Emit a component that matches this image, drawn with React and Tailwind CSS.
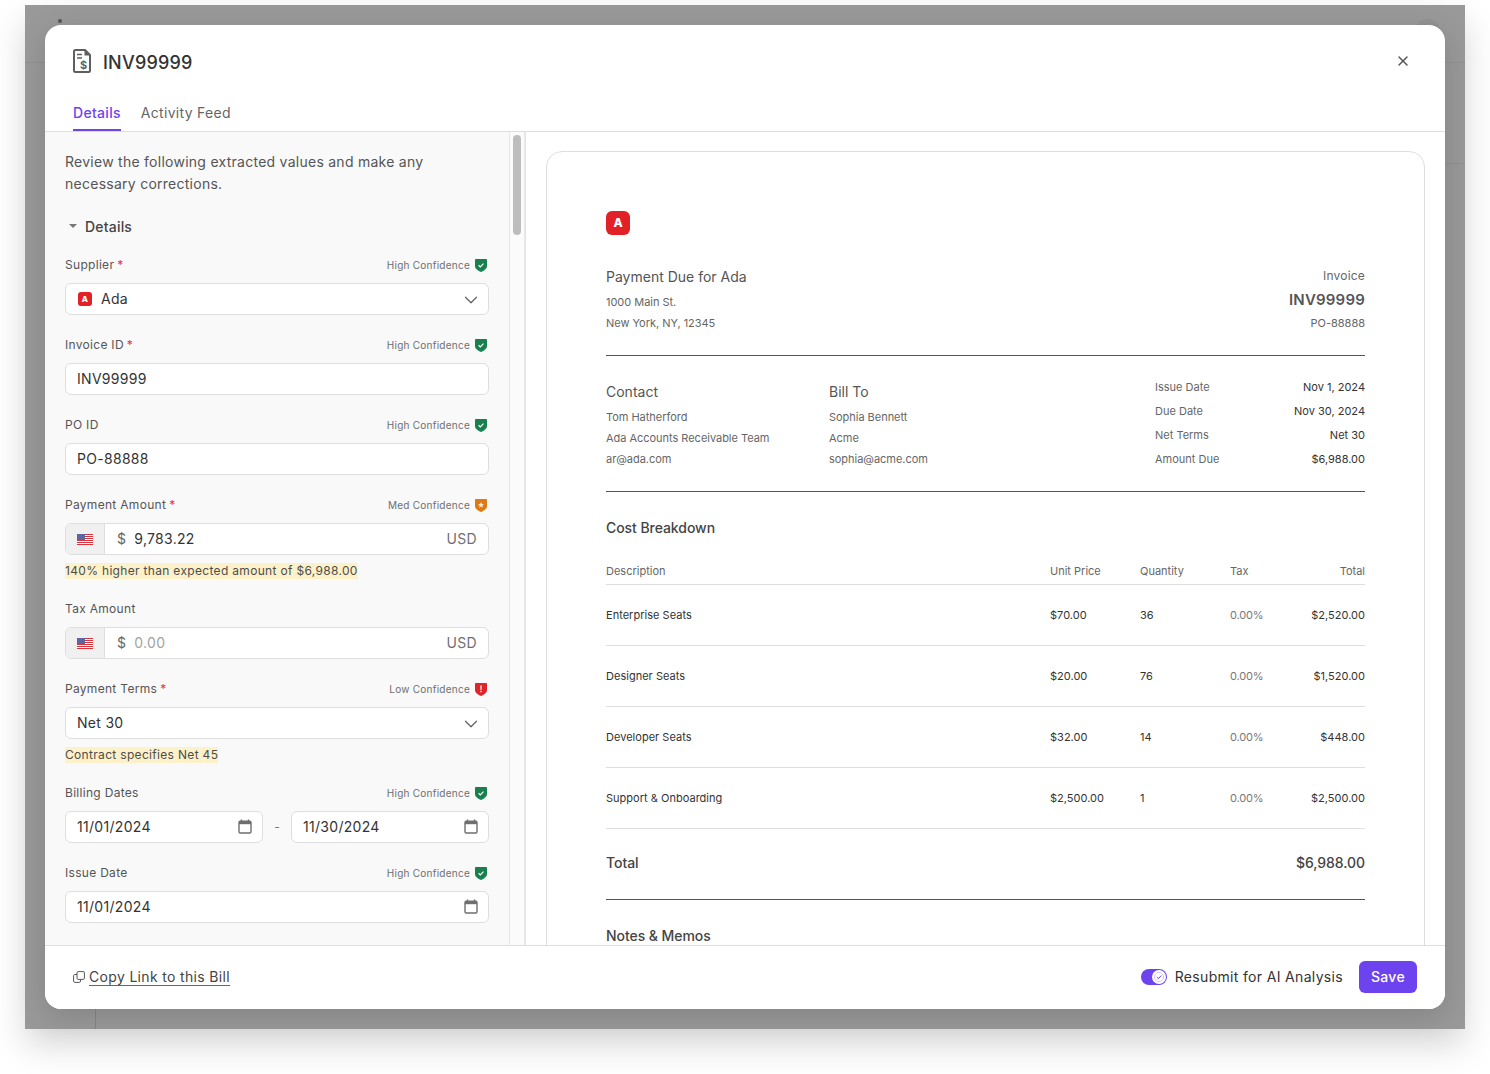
import React from 'react';
import { ChevronDown, X } from 'lucide-react';

const FONT = { fontFamily: 'Inter, "Noto Sans", sans-serif' };

const SHIELDS = {
  high: { label: 'High Confidence', color: '#1a7f4f' },
  med: { label: 'Med Confidence', color: '#dd7a12' },
  low: { label: 'Low Confidence', color: '#e0242c' },
};

const Shield = ({ level }) => {
  const { color } = SHIELDS[level];
  return (
    <svg width="12" height="13" viewBox="0 0 12 13" className="shrink-0">
      <path d="M0 0.8C0 0.4 0.4 0 0.8 0H11.2C11.6 0 12 0.4 12 0.8V7C12 9.8 9 11.8 6 13C3 11.8 0 9.8 0 7V0.8Z" fill={color} />
      {level === 'high' && <path d="M3.6 6.3L5.3 7.9L8.5 4.6" fill="none" stroke="#fff" strokeWidth="1.2" />}
      {level === 'med' && <path d="M6 2.9L6.9 4.9L9 5.1L7.4 6.5L7.9 8.6L6 7.5L4.1 8.6L4.6 6.5L3 5.1L5.1 4.9Z" fill="#fde7c8" />}
      {level === 'low' && <path d="M5.3 2.6H6.7L6.5 6.9H5.5ZM5.3 7.8H6.7V9.2H5.3Z" fill="#fff" />}
    </svg>
  );
};

const AdaLogo = ({ big }) => (
  <span
    className={
      big
        ? 'flex h-6 w-6 items-center justify-center rounded-md bg-[#e22127] text-[12px] font-extrabold text-white'
        : 'mt-[2px] ml-px flex h-[14px] w-[14px] items-center justify-center rounded-[3px] bg-[#e22127] text-[8px] font-extrabold text-white'
    }
  >
    A
  </span>
);

const Flag = () => (
  <svg width="16" height="11" viewBox="0 0 16 11" className="shrink-0">
    <rect width="16" height="11" fill="#fff" />
    {[0, 2, 4, 6, 8, 10].map((y) => (
      <rect key={y} y={y} width="16" height="1" fill="#d8343c" />
    ))}
    <rect width="8" height="6" fill="#3d4289" />
    {[1, 3, 5, 7].map((x) => [1, 3, 5].map((y) => <rect key={`${x}-${y}`} x={x - 0.5} y={y - 0.5} width="1" height="1" fill="#c9cbe4" />))}
  </svg>
);

const Calendar = () => (
  <svg width="14" height="15" viewBox="0 0 14 15" fill="none" className="shrink-0">
    <path d="M3.5 0.5V3M10.5 0.5V3" stroke="#6f6f6f" strokeWidth="1.4" />
    <rect x="1" y="2.2" width="12" height="11.8" rx="1.2" stroke="#6f6f6f" strokeWidth="1.4" />
    <rect x="1" y="2.2" width="12" height="3" fill="#6f6f6f" />
  </svg>
);

const DocIcon = () => (
  <svg width="18" height="24" viewBox="0 0 18 24" fill="none" className="shrink-0">
    <path d="M2.5 1H12L17 6V21.5C17 22.3 16.3 23 15.5 23H2.5C1.7 23 1 22.3 1 21.5V2.5C1 1.7 1.7 1 2.5 1Z" stroke="#5f5f5f" strokeWidth="2" strokeLinejoin="round" />
    <path d="M11.5 1V6.5H17L11.5 1Z" fill="#5f5f5f" />
    <path d="M4 5.5H9M4 9H9" stroke="#5f5f5f" strokeWidth="1.4" />
    <text x="10.5" y="20" textAnchor="middle" fontSize="11" fontWeight="700" fill="#5f5f5f" style={FONT}>$</text>
  </svg>
);

const CopyIcon = () => (
  <svg width="12" height="12" viewBox="0 0 12 12" fill="none" className="shrink-0">
    <rect x="4" y="0.6" width="7.4" height="7.8" rx="1.2" stroke="#555" strokeWidth="1" />
    <path d="M4 3.5H1.8C1.1 3.5 0.6 4 0.6 4.7V10.2C0.6 10.9 1.1 11.4 1.8 11.4H6.3C7 11.4 7.5 10.9 7.5 10.2V8.4" stroke="#555" strokeWidth="1" />
  </svg>
);

const FieldLabel = ({ label, required, level }) => (
  <div className="mb-[8px] flex h-[20px] items-center justify-between">
    <span className="text-[12px] tracking-[0.3px] text-[#555]">
      {label}
      {required && <span className="ml-[3px] text-[#e0343c]">*</span>}
    </span>
    {level && (
      <span className="flex items-center gap-[5px] pr-[2px] text-[10px] tracking-[0.25px] text-[#6f6f6f]">
        {SHIELDS[level].label}
        <Shield level={level} />
      </span>
    )}
  </div>
);

const Box = ({ children, className = '' }) => (
  <div className={`flex h-8 items-center rounded-md border border-[#dedede] bg-white text-[14px] tracking-[0.3px] text-[#333] ${className}`}>
    {children}
  </div>
);

const Hint = ({ children }) => (
  <div className="mt-2 flex h-4 items-center">
    <span className="bg-[#fdf1c9] text-[12px] leading-4 tracking-[0.32px] text-[#4d4d4d]">{children}</span>
  </div>
);

const MoneyInput = ({ value, placeholder }) => (
  <Box className="overflow-hidden">
    <span className="flex h-full w-[39px] shrink-0 items-center justify-center border-r border-[#dedede] bg-[#f0f0f0]">
      <Flag />
    </span>
    <span className="ml-3 pb-[2px] text-[#666]">$</span>
    <span className={placeholder ? 'ml-2 pb-[2px] text-[#a3a3a3]' : 'ml-2 pb-[2px]'}>{value}</span>
    <span className="mr-[11px] ml-auto pb-[2px] text-[#707070]">USD</span>
  </Box>
);

const Select = ({ children }) => (
  <Box className="justify-between pr-[6px] pb-[2px] pl-[11px]">
    <span className="flex items-center">{children}</span>
    <ChevronDown size={22} strokeWidth={1.4} color="#666" className="mt-[4px]" />
  </Box>
);

const DateInput = ({ value, className = '' }) => (
  <Box className={`justify-between pr-[10px] pb-[2px] pl-[11px] ${className}`}>
    {value}
    <Calendar />
  </Box>
);

const Row = ({ desc, unit, qty, total }) => (
  <div className="grid h-[61px] grid-cols-[444px_90px_90px_1fr_80px] items-center border-b border-[#dedede] text-[11px] tracking-[0.02px] text-[#333]">
    <span>{desc}</span>
    <span>{unit}</span>
    <span>{qty}</span>
    <span className="tracking-[-0.2px] text-[#777]">0.00%</span>
    <span className="text-right">{total}</span>
  </div>
);

const Meta = ({ label, value }) => (
  <div className="flex h-6 items-center justify-between text-[11px]">
    <span className="text-[#666]">{label}</span>
    <span className="text-[#333]">{value}</span>
  </div>
);

const SmallLine = ({ children }) => <p className="h-[21px] text-[11px] leading-[21px] tracking-[-0.03px] text-[#666]">{children}</p>;

const App = () => {
  return (
    <div className="h-[1074px] w-[1490px] overflow-hidden bg-white pt-[5px] pl-[25px]" style={FONT}>
      <div className="relative h-[1024px] w-[1440px] bg-[#999] p-5 shadow-[0_16px_32px_rgba(0,0,0,0.16)]">
        <div className="absolute top-[57px] left-0 h-px w-full bg-[#8f8f8f]" />
        <div className="absolute top-[158px] right-0 h-px w-5 bg-[#8f8f8f]" />
        <div className="absolute bottom-0 left-[70px] h-5 w-px bg-[#858585]" />
        <div className="absolute top-[14px] left-[33px] h-1 w-1 rounded-full bg-[#555]" />
        <div className="absolute top-[14px] right-[25px] h-6 w-6 rounded-full bg-[#929292]" />

        <div className="relative flex h-[984px] w-[1400px] flex-col overflow-hidden rounded-2xl bg-white shadow-[0_8px_30px_rgba(0,0,0,0.14)]">
          <header className="h-[107px] shrink-0 border-b border-[#dedede] px-7">
            <div className="flex h-[72px] items-center">
              <DocIcon />
              <h1 className="ml-3 pt-[2px] text-[18px] font-medium tracking-[0.2px] text-[#333]">INV99999</h1>
              <X size={16} strokeWidth={2.2} color="#555" className="mr-[6px] ml-auto" />
            </div>
            <nav className="flex h-[34px] gap-5 text-[14px] tracking-[0.3px]">
              <span className="border-b-2 border-[#6d43f0] pt-[5px] font-medium text-[#6d43f0]">Details</span>
              <span className="pt-[5px] text-[#666]">Activity Feed</span>
            </nav>
          </header>

          <div className="flex min-h-0 flex-1">
            <section className="w-[464px] shrink-0 overflow-hidden bg-[#f9f9f9] px-5 pt-[19px]">
              <p className="w-[380px] text-[14px] leading-[22px] tracking-[0.26px] text-[#555]">
                Review the following extracted values and make any necessary corrections.
              </p>
              <div className="mt-[21px] mb-[19px] flex h-[20px] items-center text-[14px] font-medium tracking-[0.2px] text-[#444]">
                <span className="mr-[8px] ml-[4px] h-0 w-0 border-x-[4px] border-t-[4px] border-x-transparent border-t-[#777]" />
                Details
              </div>

              <div className="flex flex-col gap-[20px]">
                <div>
                  <FieldLabel label="Supplier" required level="high" />
                  <Select>
                    <AdaLogo />
                    <span className="ml-[9px]">Ada</span>
                  </Select>
                </div>
                <div>
                  <FieldLabel label="Invoice ID" required level="high" />
                  <Box className="px-[11px] pb-[2px]">INV99999</Box>
                </div>
                <div>
                  <FieldLabel label="PO ID" level="high" />
                  <Box className="px-[11px] pb-[2px]">PO-88888</Box>
                </div>
                <div>
                  <FieldLabel label="Payment Amount" required level="med" />
                  <MoneyInput value="9,783.22" />
                  <Hint>140% higher than expected amount of $6,988.00</Hint>
                </div>
                <div>
                  <FieldLabel label="Tax Amount" />
                  <MoneyInput value="0.00" placeholder />
                </div>
                <div>
                  <FieldLabel label="Payment Terms" required level="low" />
                  <Select>Net 30</Select>
                  <Hint>Contract specifies Net 45</Hint>
                </div>
                <div>
                  <FieldLabel label="Billing Dates" level="high" />
                  <div className="flex items-center">
                    <DateInput value="11/01/2024" className="w-[198px]" />
                    <span className="w-[28px] text-center text-[12px] text-[#777]">-</span>
                    <DateInput value="11/30/2024" className="flex-1" />
                  </div>
                </div>
                <div>
                  <FieldLabel label="Issue Date" level="high" />
                  <DateInput value="11/01/2024" />
                </div>
              </div>
            </section>

            <div className="w-[16px] shrink-0 border-x border-[#e8e8e8] bg-[#fbfbfb] pt-[3px] pl-[3px]">
              <div className="h-[100px] w-2 rounded-full bg-[#bdbdbd]" />
            </div>

            <section className="min-w-0 flex-1 border-l border-[#e4e4e4] px-5 pt-[19px]">
              <div className="h-[900px] rounded-2xl border border-[#dedede] px-[59px] pt-[59px]">
                <AdaLogo big />

                <div className="mt-[30px] flex h-[91px] justify-between border-b border-[#555]">
                  <div>
                    <p className="h-[27px] text-[14px] leading-6 text-[#555]">Payment Due for Ada</p>
                    <SmallLine>1000 Main St.</SmallLine>
                    <SmallLine>New York, NY, 12345</SmallLine>
                  </div>
                  <div className="pt-px text-right">
                    <p className="h-[20px] text-[12px] leading-[20px] tracking-[0.2px] text-[#666]">Invoice</p>
                    <p className="mt-[2px] h-[24px] text-[15px] leading-[24px] font-semibold tracking-[0.2px] text-[#555]">INV99999</p>
                    <p className="mt-px h-[21px] text-[11px] leading-[21px] text-[#666]">PO-88888</p>
                  </div>
                </div>

                <div className="flex h-[136px] border-b border-[#555] pt-[25px]">
                  <div className="w-[223px]">
                    <p className="mb-[4px] h-[22px] text-[14px] leading-[22px] text-[#555]">Contact</p>
                    <SmallLine>Tom Hatherford</SmallLine>
                    <SmallLine>Ada Accounts Receivable Team</SmallLine>
                    <SmallLine>ar@ada.com</SmallLine>
                  </div>
                  <div className="w-[326px]">
                    <p className="mb-[4px] h-[22px] text-[14px] leading-[22px] text-[#555]">Bill To</p>
                    <SmallLine>Sophia Bennett</SmallLine>
                    <SmallLine>Acme</SmallLine>
                    <SmallLine>sophia@acme.com</SmallLine>
                  </div>
                  <div className="-mt-[6px] flex-1">
                    <Meta label="Issue Date" value="Nov 1, 2024" />
                    <Meta label="Due Date" value="Nov 30, 2024" />
                    <Meta label="Net Terms" value="Net 30" />
                    <Meta label="Amount Due" value="$6,988.00" />
                  </div>
                </div>

                <h2 className="mt-[25px] h-[22px] text-[14px] leading-[22px] font-medium tracking-[-0.06px] text-[#444]">Cost Breakdown</h2>
                <div className="mt-[25px] grid h-[21px] grid-cols-[444px_90px_90px_1fr_80px] border-b border-[#dedede] text-[11px] leading-[15px] text-[#666]">
                  <span>Description</span>
                  <span>Unit Price</span>
                  <span>Quantity</span>
                  <span>Tax</span>
                  <span className="text-right">Total</span>
                </div>
                <Row desc="Enterprise Seats" unit="$70.00" qty="36" total="$2,520.00" />
                <Row desc="Designer Seats" unit="$20.00" qty="76" total="$1,520.00" />
                <Row desc="Developer Seats" unit="$32.00" qty="14" total="$448.00" />
                <Row desc="Support & Onboarding" unit="$2,500.00" qty="1" total="$2,500.00" />

                <div className="flex h-[71px] items-center justify-between border-b border-[#555] pb-[4px] text-[14px] font-medium tracking-[-0.06px] text-[#444]">
                  <span>Total</span>
                  <span>$6,988.00</span>
                </div>
                <h2 className="mt-[25px] h-[22px] text-[14px] leading-[22px] font-medium tracking-[-0.06px] text-[#444]">Notes &amp; Memos</h2>
              </div>
            </section>
          </div>

          <footer className="flex h-[64px] shrink-0 items-center border-t border-[#dedede] bg-white pr-7 pb-[2px] pl-7 text-[14px] tracking-[0.33px] text-[#444]">
            <CopyIcon />
            <span className="ml-[4px] border-b border-[#666] leading-[17px]">Copy Link to this Bill</span>
            <span className="ml-auto flex h-4 w-[26px] items-center justify-end rounded-full bg-[#6d43f0] pr-[1px]">
              <svg width="14" height="14" viewBox="0 0 14 14" fill="none">
                <circle cx="7" cy="7" r="7" fill="#fff" />
                <circle cx="7" cy="7" r="4.6" stroke="#c9bbf8" strokeWidth="0.8" />
                <path d="M4.8 7.1L6.4 8.6L9.3 5.5" stroke="#6d43f0" strokeWidth="1" />
              </svg>
            </span>
            <span className="ml-2 text-[#333]">Resubmit for AI Analysis</span>
            <button className="ml-4 h-8 w-[58px] rounded-md bg-[#6d43f0] text-[14px] font-medium text-white">Save</button>
          </footer>
        </div>
      </div>
    </div>
  );
};

export default App;
